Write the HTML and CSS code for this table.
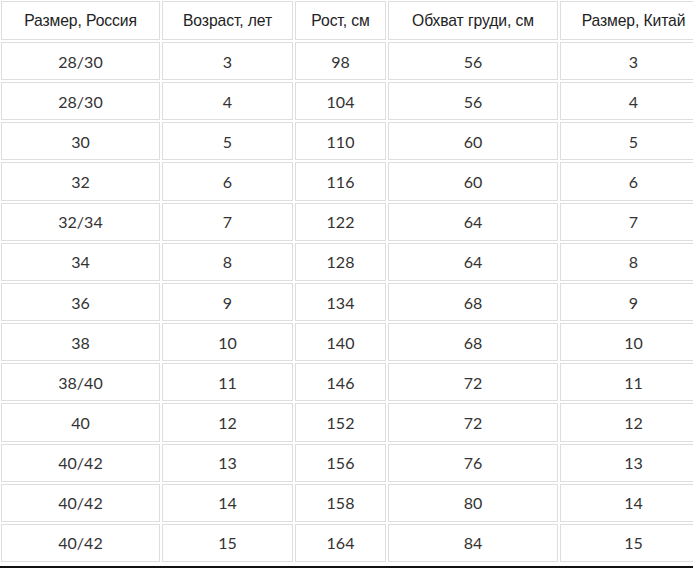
FILE: index.html
```html
<!DOCTYPE html>
<html lang="ru">
<head>
<meta charset="utf-8">
<title>Таблица размеров</title>
<link rel="stylesheet" href="styles.css">
</head>
<body>
<div class="page">
<table class="sizes">
<colgroup>
<col class="c1"><col class="c2"><col class="c3"><col class="c4"><col class="c5">
</colgroup>
<thead>
<tr><th>Размер, Россия</th><th>Возраст, лет</th><th>Рост, см</th><th>Обхват груди, см</th><th>Размер, Китай</th></tr>
</thead>
<tbody>
<tr><td>28/30</td><td>3</td><td>98</td><td>56</td><td>3</td></tr>
<tr><td>28/30</td><td>4</td><td>104</td><td>56</td><td>4</td></tr>
<tr><td>30</td><td>5</td><td>110</td><td>60</td><td>5</td></tr>
<tr><td>32</td><td>6</td><td>116</td><td>60</td><td>6</td></tr>
<tr><td>32/34</td><td>7</td><td>122</td><td>64</td><td>7</td></tr>
<tr><td>34</td><td>8</td><td>128</td><td>64</td><td>8</td></tr>
<tr><td>36</td><td>9</td><td>134</td><td>68</td><td>9</td></tr>
<tr><td>38</td><td>10</td><td>140</td><td>68</td><td>10</td></tr>
<tr><td>38/40</td><td>11</td><td>146</td><td>72</td><td>11</td></tr>
<tr><td>40</td><td>12</td><td>152</td><td>72</td><td>12</td></tr>
<tr><td>40/42</td><td>13</td><td>156</td><td>76</td><td>13</td></tr>
<tr><td>40/42</td><td>14</td><td>158</td><td>80</td><td>14</td></tr>
<tr><td>40/42</td><td>15</td><td>164</td><td>84</td><td>15</td></tr>
</tbody>
</table>
<div class="rule"></div>
</div>
</body>
</html>
```
FILE: styles.css
```css
html, body {
  margin: 0;
  padding: 0;
  background: #fff;
  overflow: hidden;
}
.page {
  width: 693px;
  height: 568px;
  overflow: hidden;
  position: relative;
}
.sizes {
  border-collapse: separate;
  border-spacing: 2px;
  margin: -1px 0 0 -1px;
  table-layout: fixed;
  width: 710px;
}
.c1 { width: 159px; }
.c2 { width: 131px; }
.c3 { width: 91px; }
.c4 { width: 170px; }
.c5 { width: 147px; }
.sizes th, .sizes td {
  border: 1px solid #dedede;
  text-align: center;
  vertical-align: middle;
  padding: 0;
  height: 36.17px;
}
.sizes th {
  font-family: "Liberation Sans", Arial, sans-serif;
  font-weight: normal;
  font-size: 15.7px;
  letter-spacing: -0.1px;
  color: #222;
  height: 37px;
}
.sizes td {
  font-family: Lato, "Liberation Sans", sans-serif;
  font-size: 16px;
  color: #333;
}
.rule {
  position: absolute;
  left: 0;
  right: 0;
  top: 566px;
  height: 2px;
  background: #111;
}
```
